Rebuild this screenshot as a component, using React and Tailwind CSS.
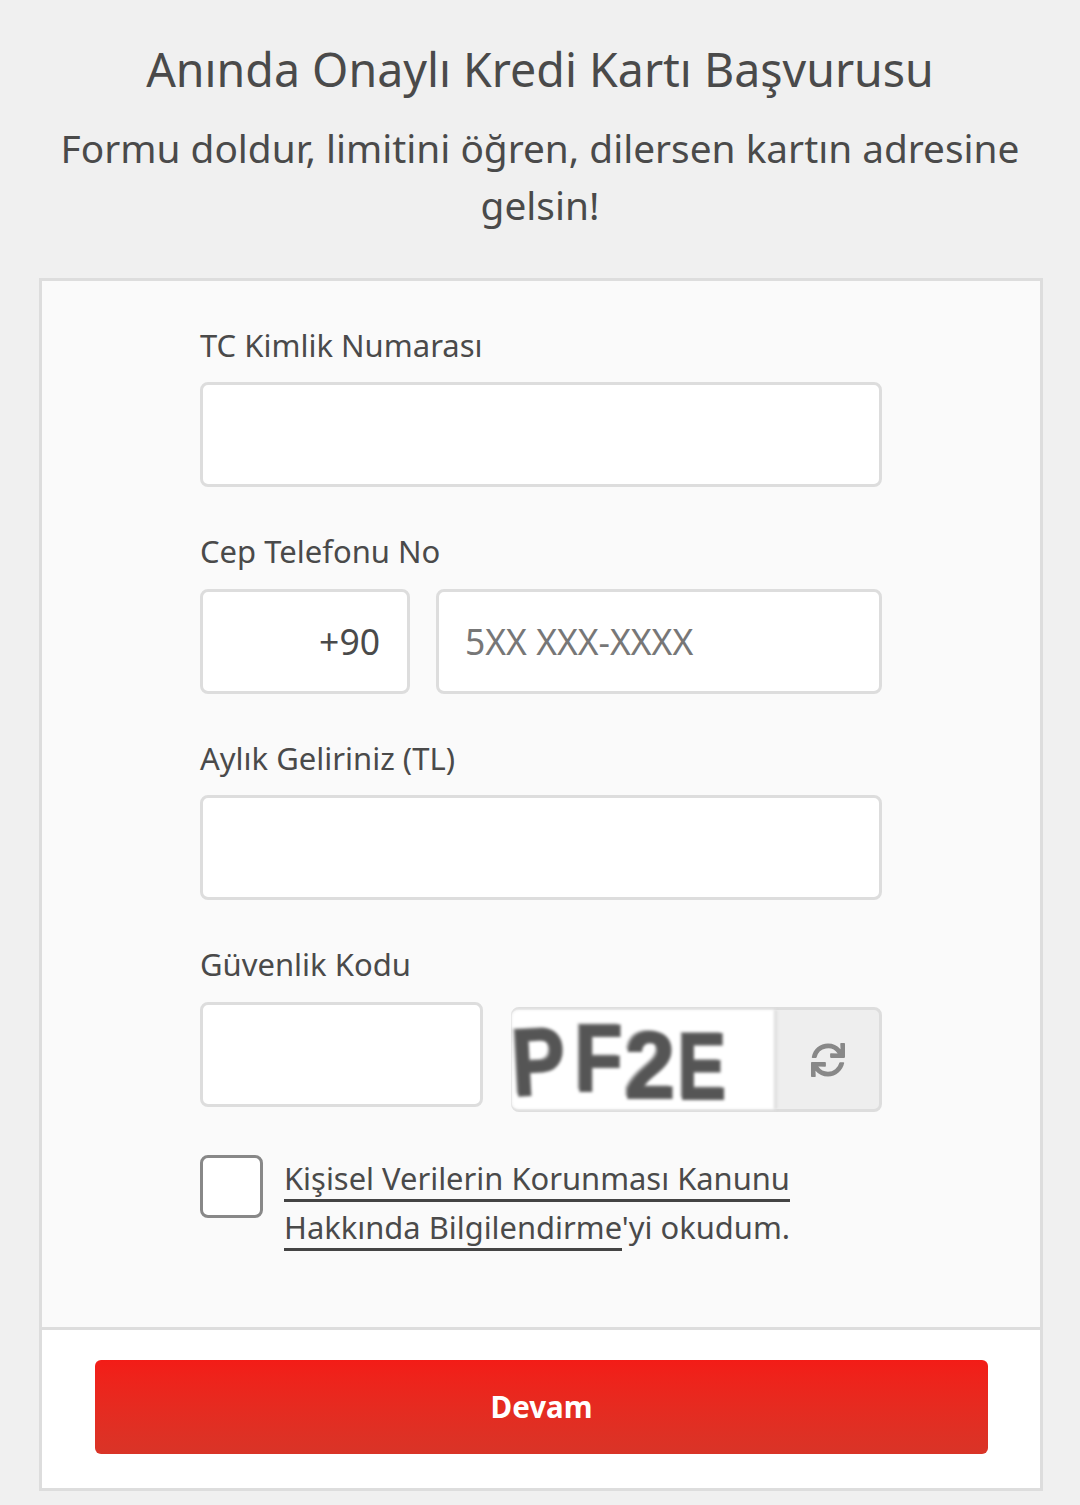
import { FaSync } from 'react-icons/fa';

const font = { fontFamily: '"Noto Sans", sans-serif' };

function Field({ label, children }) {
  return (
    <div>
      <label className="block h-[45px] text-[31px] leading-[45px] text-[#4a4a4a]">{label}</label>
      {children}
    </div>
  );
}

function TextBox({ className = '', children }) {
  return (
    <div className={`h-[105px] rounded-lg border-[3px] border-[#ddd] bg-white flex items-center text-[35.5px] ${className}`}>
      {children}
    </div>
  );
}

export default function App() {
  return (
    <div style={font} className="w-[1080px] h-[1505px] overflow-hidden bg-[#f0f0f0] text-[#4a4a4a]">
      {/* Header */}
      <div className="pt-[36px] text-center">
        <h1 className="text-[46.5px] leading-[66px] font-normal">Anında Onaylı Kredi Kartı Başvurusu</h1>
        <p className="mt-[18px] px-[40px] text-[38.8px] leading-[57px]">
          Formu doldur, limitini öğren, dilersen kartın adresine gelsin!
        </p>
      </div>

      {/* Card */}
      <div className="mt-[44px] mx-[39px] w-[1004px] h-[1213px] border-[3px] border-[#ddd] bg-white flex flex-col">
        <div className="h-[1049px] shrink-0 bg-[#fafafa] border-b-[3px] border-[#ddd] pt-[42px] px-[158px]">
          <div className="w-[682px]">
            <Field label="TC Kimlik Numarası">
              <TextBox className="mt-[14px]" />
            </Field>

            <div className="mt-[42px]">
              <Field label="Cep Telefonu No">
                <div className="mt-[15px] flex gap-[26px]">
                  <TextBox className="w-[210px] justify-end pr-[27px]">+90</TextBox>
                  <TextBox className="flex-1 pl-[26px] text-[#777]">5XX XXX-XXXX</TextBox>
                </div>
              </Field>
            </div>

            <div className="mt-[42px]">
              <Field label="Aylık Geliriniz (TL)">
                <TextBox className="mt-[14px]" />
              </Field>
            </div>

            <div className="mt-[42px]">
              <Field label="Güvenlik Kodu">
                <div className="mt-[15px] flex gap-[28px]">
                  <TextBox className="w-[283px]" />
                  <div className="mt-[5px] flex-1 h-[105px] rounded-lg border-[3px] border-l-[1px] border-[#ddd] bg-[#eee] flex">
                    <div
                      className="w-[265px] rounded-l-md bg-white border-r-[3px] border-[#ddd] flex text-[95px] leading-[102px] font-bold text-[#555] blur-[1.5px] [text-shadow:-3px_-2px_0_#aaa] [-webkit-text-stroke:2px_#5c5c5c]"
                      style={{ fontFamily: '"Liberation Sans", sans-serif' }}
                    >
                      <span className="block w-[63px] origin-left scale-x-[0.84] -rotate-[3deg] translate-y-[2px]">P</span>
                      <span className="block w-[50px] origin-left scale-x-[0.82] -translate-y-[3px]">F</span>
                      <span className="block w-[53px] origin-left scale-x-[0.95] translate-y-[4px]">2</span>
                      <span className="block w-[52px] origin-left scale-x-[0.76] translate-y-[5px]">E</span>
                    </div>
                    <div className="flex-1 flex items-center justify-center text-[#888]">
                      <FaSync size={34} />
                    </div>
                  </div>
                </div>
              </Field>
            </div>

            {/* Consent */}
            <div className="mt-[43px] flex">
              <div className="w-[63px] h-[63px] shrink-0 rounded-lg border-[3px] border-[#888] bg-white" />
              <p className="ml-[21px] -mt-[1px] text-[30.9px] leading-[49px] text-[#4a4a4a] whitespace-nowrap">
                <span className="border-b-[3px] border-[#444]">Kişisel Verilerin Korunması Kanunu</span>
                <br />
                <span className="border-b-[3px] border-[#444]">Hakkında Bilgilendirme</span>
                'yi okudum.
              </p>
            </div>
          </div>
        </div>

        {/* Footer */}
        <div className="flex-1 px-[53px] pt-[30px]">
          <button className="w-[893px] h-[94px] rounded-md bg-gradient-to-b from-[#f31c17] to-[#d93427] text-white text-[29.5px] font-bold">
            Devam
          </button>
        </div>
      </div>
    </div>
  );
}
